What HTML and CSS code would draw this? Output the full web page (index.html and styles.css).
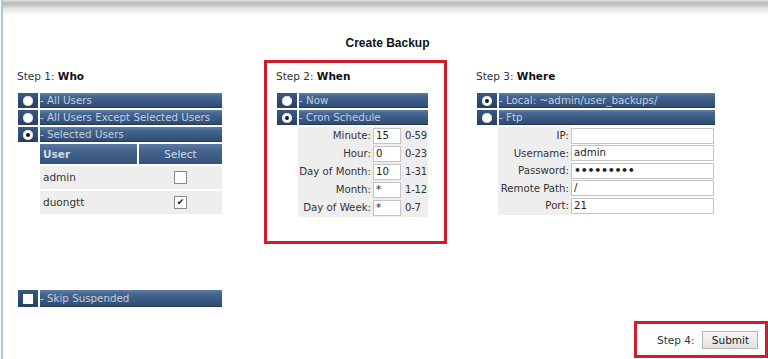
FILE: index.html
```html
<!DOCTYPE html>
<html>
<head>
<meta charset="utf-8">
<link rel="stylesheet" href="styles.css">
</head>
<body>
<div class="page">
  <div class="topshade"></div>
  <h1 class="title">Create Backup</h1>
  <div class="steps">
    <div class="col col1">
      <div class="step-label">Step 1: <b>Who</b></div>
      <div class="opt"><span class="rc"><span class="radio"></span></span><span class="bar">- All Users</span></div>
      <div class="opt"><span class="rc"><span class="radio"></span></span><span class="bar">- All Users Except Selected Users</span></div>
      <div class="opt"><span class="rc"><span class="radio on"></span></span><span class="bar">- Selected Users</span></div>
      <div class="users">
        <div class="uhead">
          <div class="uh-user">User</div>
          <div class="uh-sel">Select</div>
        </div>
        <div class="urow"><div class="uname">admin</div><div class="usel"><span class="cb"></span></div></div>
        <div class="urow"><div class="uname">duongtt</div><div class="usel"><span class="cb checked">&#10004;</span></div></div>
      </div>
      <div class="opt skip"><span class="rc"><span class="sq"></span></span><span class="bar">- Skip Suspended</span></div>
    </div>

    <div class="col col2 redbox">
      <div class="step-label">Step 2: <b>When</b></div>
      <div class="opt"><span class="rc"><span class="radio"></span></span><span class="bar">- Now</span></div>
      <div class="opt"><span class="rc"><span class="radio on"></span></span><span class="bar">- Cron Schedule</span></div>
      <div class="cron">
        <div class="cl">Minute:</div><div class="ci"><span class="box">15</span></div><div class="cr">0-59</div>
        <div class="cl">Hour:</div><div class="ci"><span class="box">0</span></div><div class="cr">0-23</div>
        <div class="cl">Day of Month:</div><div class="ci"><span class="box">10</span></div><div class="cr">1-31</div>
        <div class="cl">Month:</div><div class="ci"><span class="box">*</span></div><div class="cr">1-12</div>
        <div class="cl">Day of Week:</div><div class="ci"><span class="box">*</span></div><div class="cr">0-7</div>
      </div>
    </div>

    <div class="col col3">
      <div class="step-label">Step 3: <b>Where</b></div>
      <div class="opt"><span class="rc"><span class="radio on"></span></span><span class="bar">- Local: ~admin/user_backups/</span></div>
      <div class="opt"><span class="rc"><span class="radio"></span></span><span class="bar">- Ftp</span></div>
      <div class="ftp">
        <div class="fl">IP:</div><div class="fi"><span class="box"></span></div>
        <div class="fl">Username:</div><div class="fi"><span class="box">admin</span></div>
        <div class="fl">Password:</div><div class="fi"><span class="box dots">&#8226;&#8226;&#8226;&#8226;&#8226;&#8226;&#8226;&#8226;&#8226;</span></div>
        <div class="fl">Remote Path:</div><div class="fi"><span class="box">/</span></div>
        <div class="fl">Port:</div><div class="fi"><span class="box">21</span></div>
      </div>
    </div>
  </div>

  <div class="footer">
    <div class="redbox step4">
      <span class="s4">Step 4:</span>
      <span class="submit">Submit</span>
    </div>
  </div>
</div>
</body>
</html>
```

FILE: styles.css
```css
html, body {
  margin: 0;
  padding: 0;
  background: #ffffff;
}
body {
  font-family: "DejaVu Sans", Verdana, sans-serif;
  font-size: 10.5px;
  color: #333333;
  overflow: hidden;
}
.page {
  position: relative;
  margin-left: 1px;
  border-left: 2px solid #b3c2d4;
  height: 359px;
  box-sizing: border-box;
}
.topshade {
  height: 15px;
  background: linear-gradient(#e2e2e2 0px, #b9b9b9 3px, #c4c4c4 5px, #e6e6e6 9px, #ffffff 15px);
}
.title {
  margin: 21px 0 0 0;
  font-family: "Liberation Sans", Arial, sans-serif;
  font-size: 12px;
  font-weight: bold;
  line-height: 14px;
  text-align: center;
  color: #111111;
  padding-left: 4px;
}
.steps {
  display: flex;
  align-items: flex-start;
  margin-top: 10px;
  padding-left: 15px;
}
.col1 {
  width: 204px;
  padding-top: 9px;
}
.col2 {
  margin-left: 42px;
  width: 151px;
  padding: 6px 16px 24px 10px;
}
.col3 {
  margin-left: 30px;
  width: 238px;
  padding-top: 9px;
}
.redbox {
  border: 3px solid #cf1d29;
}
.step-label {
  line-height: 14px;
  height: 14px;
  margin-bottom: 10px;
  margin-left: -1px;
  color: #333333;
  white-space: nowrap;
}
.step-label b {
  color: #111111;
}
.opt {
  display: flex;
  height: 15px;
  margin-bottom: 2px;
}
.rc {
  width: 20px;
  flex: none;
  background: linear-gradient(#3a5880, #263f62);
  display: flex;
  align-items: center;
  justify-content: center;
  margin-right: 2px;
}
.radio {
  width: 10px;
  height: 10px;
  border-radius: 50%;
  background: #ffffff;
  box-shadow: inset 0 0 0 1px #d8d8d8;
  position: relative;
}
.radio.on::after {
  content: "";
  position: absolute;
  left: 3px;
  top: 3px;
  width: 4px;
  height: 4px;
  border-radius: 50%;
  background: #111111;
}
.sq {
  width: 10px;
  height: 10px;
  background: #ffffff;
}
.bar {
  flex: 1;
  background: linear-gradient(#5f7ea8 0%, #46668f 25%, #3b5a83 60%, #2f4c74 100%);
  border-bottom: 1px solid #24395a;
  box-sizing: border-box;
  color: #c2cfe0;
  font-size: 10.3px;
  line-height: 14px;
  padding-left: 0;
  white-space: nowrap;
  overflow: hidden;
}
.users {
  margin-left: 22px;
  margin-top: 1px;
}
.uhead {
  display: flex;
  height: 20px;
  margin-bottom: 2px;
}
.uhead > div {
  background: linear-gradient(#5a7aa4 0%, #44648d 35%, #34537c 100%);
  color: #d2dbe7;
  line-height: 20px;
}
.uh-user {
  width: 94px;
  margin-right: 2px;
  padding-left: 3px;
  font-weight: bold;
}
.uh-sel {
  flex: 1;
  text-align: center;
}
.urow {
  display: flex;
  height: 23px;
  margin-bottom: 2px;
  background: #eeeeee;
}
.uname {
  width: 94px;
  margin-right: 2px;
  padding-left: 3px;
  line-height: 23px;
  color: #333333;
}
.usel {
  flex: 1;
  display: flex;
  align-items: center;
  justify-content: center;
}
.cb {
  width: 11px;
  height: 11px;
  border: 1px solid #8a8a8a;
  background: #ffffff;
  font-size: 9px;
  line-height: 11px;
  text-align: center;
  color: #111111;
  overflow: hidden;
}
.skip {
  margin-top: 76px;
  height: 17px;
}
.skip .bar {
  line-height: 16px;
}
.cron {
  margin-left: 21px;
  margin-top: 0px;
  display: grid;
  grid-template-columns: 75px 30px 25px;
  grid-auto-rows: 18px;
  background: #eeeeee;
  font-size: 10.2px;
}
.cl {
  text-align: right;
  line-height: 18px;
  padding-right: 2px;
  white-space: nowrap;
}
.ci {
  display: flex;
  align-items: center;
}
.ci .box {
  width: 28px;
}
.cr {
  line-height: 18px;
  padding-left: 2px;
  white-space: nowrap;
  font-size: 10px;
  letter-spacing: -0.2px;
}
.box {
  display: block;
  height: 16px;
  box-sizing: border-box;
  border: 1px solid #c4c4c4;
  background: #ffffff;
  line-height: 14px;
  padding-left: 2px;
  color: #222222;
  overflow: hidden;
  white-space: nowrap;
}
.ftp {
  margin-left: 21px;
  display: grid;
  grid-template-columns: 73px 1fr;
  grid-auto-rows: 17.5px;
  font-size: 10.2px;
}
.fl {
  background: #eeeeee;
  text-align: right;
  line-height: 17.5px;
  padding-right: 2px;
  white-space: nowrap;
}
.fi {
  display: flex;
  align-items: center;
  padding-right: 1px;
}
.fi .box {
  flex: 1;
}
.dots {
  font-weight: bold;
  font-size: 11px;
  letter-spacing: -0.3px;
}
.footer {
  display: flex;
  justify-content: flex-end;
  margin-top: 12px;
  padding-right: 0px;
}
.step4 {
  width: 134px;
  height: 37px;
  box-sizing: border-box;
  display: flex;
  align-items: center;
  padding-left: 20px;
}
.s4 {
  margin-right: 8px;
  color: #333333;
}
.submit {
  width: 56px;
  height: 18px;
  box-sizing: border-box;
  border: 1px solid #b5b5b5;
  background: linear-gradient(#f6f6f6, #e2e2e2);
  text-align: center;
  line-height: 16px;
  color: #222222;
}
```
